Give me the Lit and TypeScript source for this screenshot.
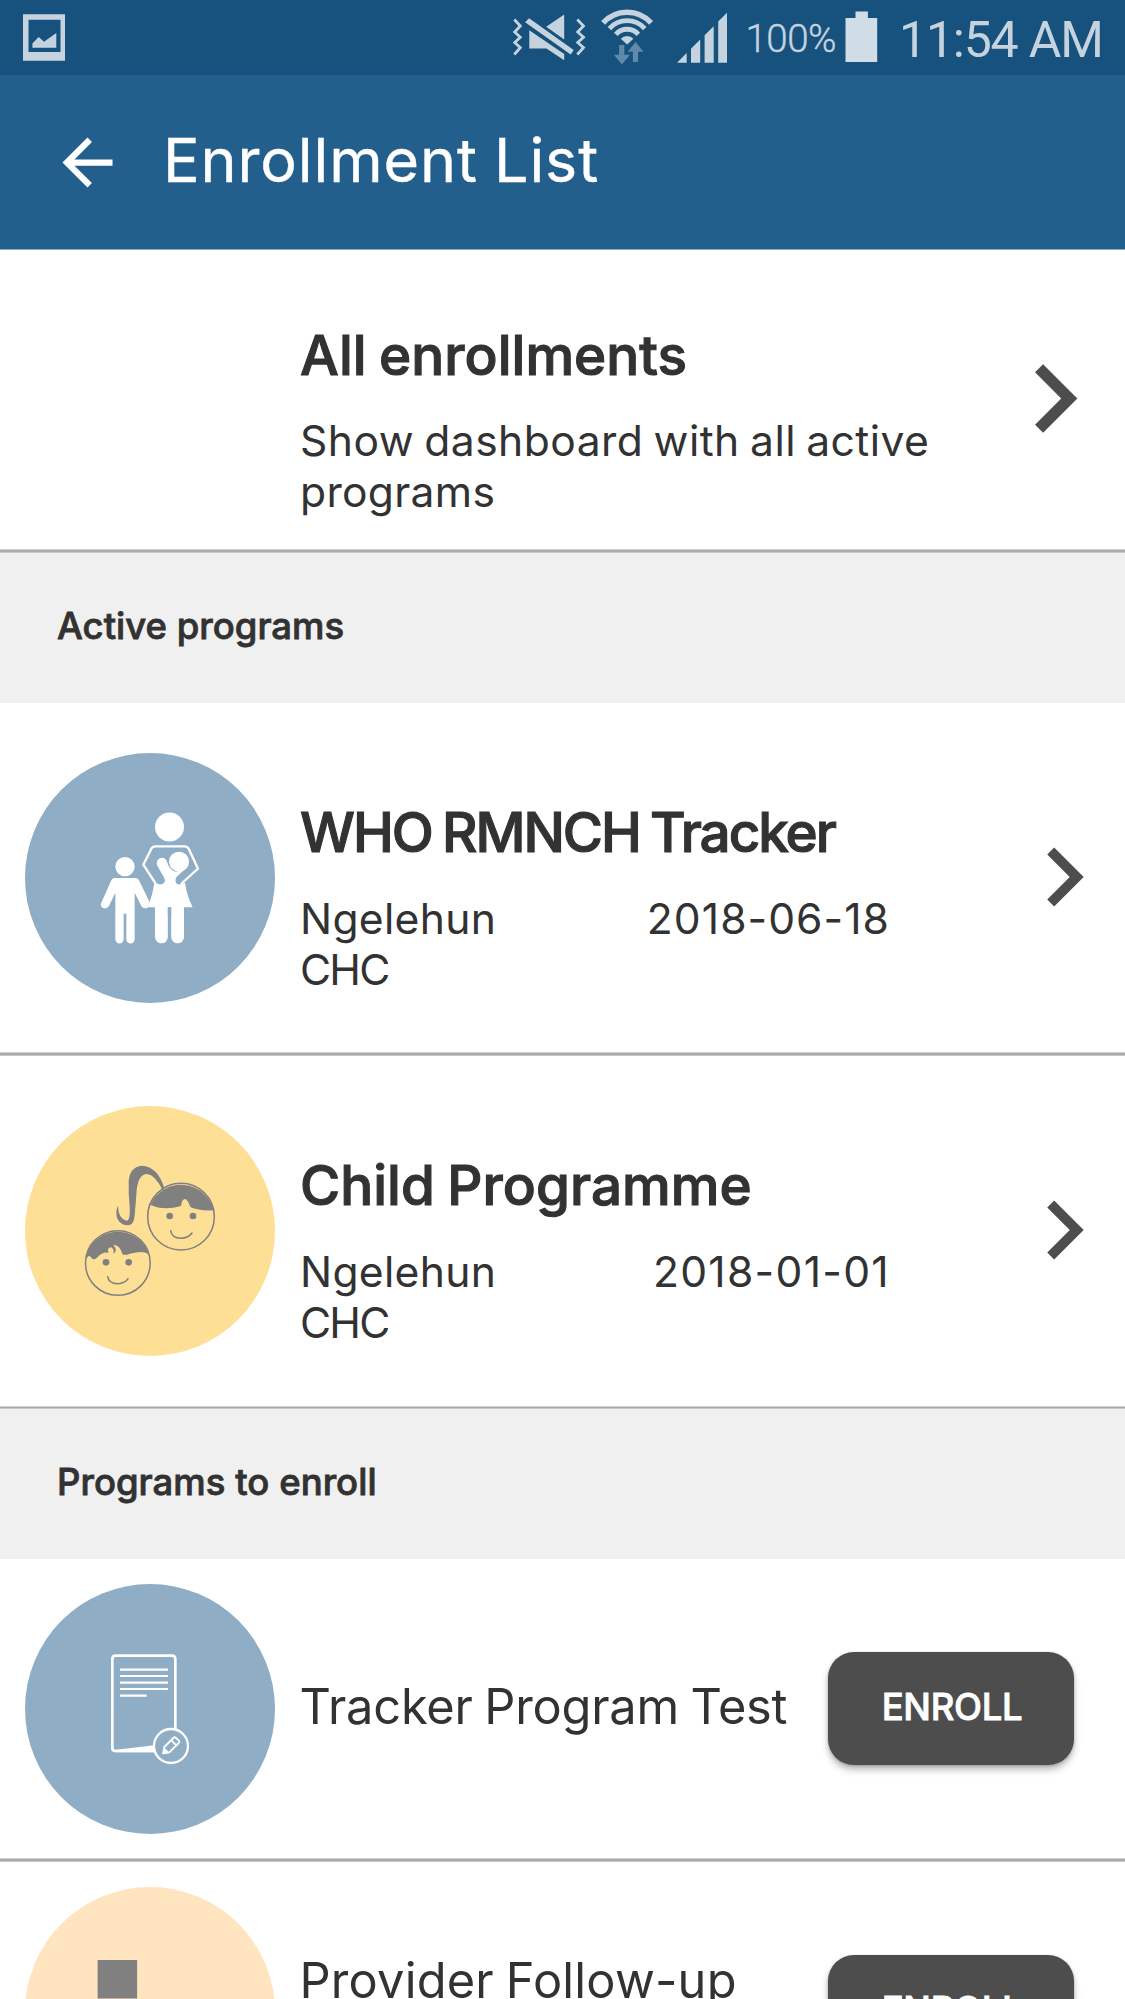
import { LitElement, html, css, svg, nothing } from "lit";
import { customElement, property } from "lit/decorators.js";
import { classMap } from "lit/directives/class-map.js";

type Art = "family" | "children" | "form" | "block";

interface Label {
  text: string;
  tracking: number;
}

interface ActiveProgram {
  name: Label;
  unit: Label[];
  date: Label;
  art: Art;
}

interface OpenProgram {
  name: Label;
  art: Art;
  tall?: boolean;
}

const label = (l: Label) => html`<span style="letter-spacing:${l.tracking}px">${l.text}</span>`;

const activePrograms: ActiveProgram[] = [
  {
    name: { text: "WHO RMNCH Tracker", tracking: -2.05 },
    unit: [{ text: "Ngelehun", tracking: 0.3 }, { text: "CHC", tracking: -1.8 }],
    date: { text: "2018-06-18", tracking: 1.05 },
    art: "family",
  },
  {
    name: { text: "Child Programme", tracking: 0.05 },
    unit: [{ text: "Ngelehun", tracking: 0.3 }, { text: "CHC", tracking: -1.8 }],
    date: { text: "2018-01-01", tracking: 1.3 },
    art: "children",
  },
];

const openPrograms: OpenProgram[] = [
  { name: { text: "Tracker Program Test", tracking: -0.22 }, art: "form" },
  { name: { text: "Provider Follow-up", tracking: 0.2 }, art: "block", tall: true },
];

@customElement("status-bar")
class StatusBar extends LitElement {
  static styles = css`
    :host {
      display: flex;
      height: 75px;
      background: #17517d;
      color: #c5d3df;
      font-family: Roboto, sans-serif;
    }
    svg { display: block; flex: none; fill: currentColor; }
    .spacer { flex: 1; }
    .level { width: 96px; font-size: 38.5px; line-height: 75px; padding-top: 1px; box-sizing: border-box; font-weight: 300; height: 75px; -webkit-text-stroke: 0.4px currentColor; }
    .level span { letter-spacing: -0.5px; margin-left: -0.5px; }
    .battery { color: #d0dde7; }
    .time { width: 226px; font-size: 50px; line-height: 80px; font-weight: 400; letter-spacing: -1.2px; box-sizing: border-box; white-space: nowrap; }
  `;
  render() {
    return html`
      <svg width="90" height="75" viewBox="0 0 90 75">
        <path fill-rule="evenodd" d="M23 14.3H65V60.7H23zM28.5 19.7V52H60.5V19.7z" />
        <path d="M32.4 43.5L38.7 37 44 41.7 56.3 33V47.8H32.4z" />
      </svg>
      <div class="spacer"></div>
      <svg width="240" height="75" viewBox="506.300 0 240 75">
        <g fill="none" stroke="currentColor" stroke-width="2.8">
          <path d="M514.6 19.5L520.6 26 515 32 520.6 37.3 515 42.5 520.6 47.7 514.6 54.5" />
          <path d="M577.6 19.5L583.8 26 578 32 583.8 37.3 578 42.5 583.8 47.7 577.6 54.5" />
        </g>
        <path d="M525.4 22.2L529.4 18.2 574 50 571 54.5zM546.5 26.7L564.5 14.5V39.5zM529.6 30.3L564.5 54V60.3L546.7 48.4H529.6z" />
        <g fill="none" stroke="currentColor">
          <path stroke-width="5.4" d="M603.4 22.9A32.3 32.3 0 0 1 651.4 22.9" />
          <path stroke-width="4.8" d="M609.7 28.6A23.8 23.8 0 0 1 645.1 28.6" />
          <path stroke-width="4.8" d="M616.1 34.3A15.2 15.2 0 0 1 638.7 34.3" />
        </g>
        <path d="M627.4 44.5L621.1 38.8A8.5 8.5 0 0 1 633.7 38.8z" />
        <path fill="#6189a9" d="M619.4 45H624.6V54.7H630.2L622.2 64.5 614.2 54.7H619.4zM635.9 42L643.9 51.7H638.4V62H633.2V51.7H628z" />
        <path d="M677.3 62.7L687 53V62.7zM691.3 62.7V48.7L700.5 39.6V62.7zM704.9 62.7V35.2L714 26.2V62.7zM718.5 62.7V21.6L727.3 12.7V62.7z" />
      </svg>
      <div class="level"><span>100%</span></div>
      <svg class="battery" width="57" height="75" viewBox="842.300 0 57 75">
        <path d="M855.8 11.5H868.2V18H877.5V62H845.8V18H855.8z" />
      </svg>
      <div class="time">11:54 AM</div>
    `;
  }
}

@customElement("program-badge")
class ProgramBadge extends LitElement {
  @property() art: Art = "family";
  static styles = css`
    :host { display: block; flex: none; width: 250px; height: 250px; }
    .disc { width: 250px; height: 250px; border-radius: 50%; overflow: hidden; }
    .family, .form { background: #90adc6; }
    .children { background: #fddf96; }
    .block { background: #ffe4c0; }
    svg { display: block; }
  `;
  private drawing() {
    switch (this.art) {
      case "family":
        return svg`<svg width="250" height="250" viewBox="75 38 750 750" fill="#fff">
          <circle cx="508.5" cy="260" r="43.5" />
          <path d="M467 430L430 373 454 325Q458 318 466 318H555Q562 318 566 325L594 385 543 431" fill="none" stroke="#fff" stroke-width="7" stroke-linejoin="round" />
          <path d="M463 426Q474 433 484 432 499 428 493 413L472 376A15.5 15.5 0 0 1 500 361Q507 388 530 394L562 381 530 409Q523 420 530 430 540 436 555 427 560 465 578 501H443Q458 465 463 426z" />
          <circle cx="537" cy="364" r="30" />
          <path d="M505 366Q508 388 527 393" fill="none" stroke="#90adc6" stroke-width="3" />
          <rect x="465" y="470" width="38.500" height="139" rx="19" />
          <rect x="513.500" y="470" width="38.500" height="139" rx="19" />
          <rect x="503.500" y="501" width="10" height="30" fill="#90adc6" />
          <circle cx="375" cy="379" r="29" />
          <path d="M343 413H408Q414 414 417 420L449 486 443 502Q430 507 424 497L404 457V597a12.500 12.500 0 0 1-25 0V520H371V597a12.500 12.500 0 0 1-25 0V457L327 497Q320 507 309 503 299 497 304 487L334 420Q337 414 343 413z" />
        </svg>`;
      case "children":
        return svg`<svg width="250" height="250" viewBox="75 47 750 750" fill="#808080">
          <g fill="none" stroke="#808080" stroke-width="4.500" stroke-linecap="round">
            <circle cx="543" cy="379" r="100" />
            <circle cx="353.500" cy="518" r="97" />
            <path d="M512 421Q516 444 543 444 565 443 576 428M323 559Q326 580 353 580 376 579 384 565" />
          </g>
          <path d="M451 343Q490 362 543 347 546 326 555 326 562 326 571 350 595 362 641 360A101 101 0 0 0 451 343z" />
          <circle cx="509" cy="377" r="10" /><circle cx="579" cy="377" r="10" />
          <path d="M494 297Q475 228 425 226 388 230 386 275 385 310 389 350 391 391 380 391 355 386 354 346 345 365 352 385 362 404 385 405 402 404 404 375 408 330 410 300 415 252 440 251 464 252 488 299z" />
          <path d="M256 512Q265 490 272 500 281 514 293 500 308 483 326 487 319 473 334 471 345 480 339 490 356 483 340 463 360 465 367 490 372 497 390 490 430 480 443 490L448 496A98 98 0 0 0 256 512z" />
          <circle cx="318" cy="516" r="10" /><circle cx="386" cy="516" r="10" />
        </svg>`;
      case "form":
        return svg`<svg width="250" height="250" viewBox="75 40 750 750" fill="none" stroke="#fff">
          <path stroke-width="8" d="M526 475V265Q526 255 516 255H347Q337 255 337 265V532Q337 541 347 541H462" />
          <path fill="#fff" stroke="none" d="M343 538L462 524V545H345z" />
          <circle cx="513" cy="526" r="51" stroke-width="7" />
          <path stroke-width="6.500" d="M360 297H504M360 316H504M360 336H504M360 355H504M360 375H440" />
          <path stroke-width="5.500" stroke-linejoin="round" d="M490 548L493 529 520 502Q524 498 528 502L536 509Q540 513 536 517L508 545zM513 508L529 524" />
          <path fill="#fff" stroke="none" d="M487 551L491 529 509 546z" />
        </svg>`;
      default:
        return svg`<svg width="250" height="250" viewBox="0 0 250 250"><rect x="72.600" y="73" width="39.500" height="38.500" fill="#808080" /></svg>`;
    }
  }
  render() {
    return html`<div class=${classMap({ disc: true, [this.art]: true })}>${this.drawing()}</div>`;
  }
}

@customElement("app-root")
class AppRoot extends LitElement {
  static styles = css`
    :host {
      display: block;
      width: 1125px;
      height: 1999px;
      overflow: hidden;
      background: #fff;
      color: #323232;
      font-family: Inter, Roboto, sans-serif;
    }
    .header {
      display: flex;
      align-items: center;
      gap: 38px;
      box-sizing: border-box;
      height: 175px;
      padding-left: 50px;
      background: #225f8d;
      border-bottom: 1px solid #8aabc4;
      color: #fff;
    }
    .header h1 { margin: 0; padding-bottom: 4px; font-size: 61px; font-weight: 400; line-height: 74px; word-spacing: -0.03em; -webkit-text-stroke: 0.4px currentColor; }
    svg { display: block; flex: none; }
    .row { display: flex; align-items: center; box-sizing: border-box; height: 299px; padding-left: 25px; }
    .row.active { height: 349px; }
    .row.active.last { height: 350px; }
    .row.all { padding-left: 300px; }
    .rule { height: 2px; background: #ababab; border-top: 1px solid #cfcfcf; border-bottom: 1px solid #c6c6c6; }
    .rule.thin { height: 1px; }
    .section { display: flex; align-items: center; box-sizing: border-box; height: 150px; padding: 0 0 5px 57px; background: #f0f0f0; font-size: 36.5px; font-weight: 500; -webkit-text-stroke: 0.8px currentColor; }
    .info { align-self: flex-start; flex: 1; padding-top: 96px; margin-left: 25px; }
    .all .info { padding-top: 72px; margin-left: 0; }
    .title { font-size: 54.8px; line-height: 66px; font-weight: 500; word-spacing: -0.04em; -webkit-text-stroke: 1.1px currentColor; white-space: nowrap; }
    .detail { display: flex; justify-content: space-between; margin-top: 28px; padding-right: 117px; font-size: 42.6px; line-height: 51.4px; word-spacing: -0.05em; white-space: nowrap; }
    .all .detail { margin-top: 27px; padding-right: 0; }
    .chevron { fill: #4d4d4d; margin: 0 2px 2px -2px; }
    .name { flex: 1; margin-left: 24.5px; padding-bottom: 3.5px; font-size: 48.75px; line-height: 58px; word-spacing: -0.04em; white-space: nowrap; }
    .name.tall { height: 116px; }
    .enroll {
      flex: none;
      width: 246px;
      height: 112.5px;
      margin-right: 51px;
      padding: 0 0 4px 2px;
      border: 0;
      border-radius: 26px;
      background: #4d4d4d;
      color: #fff;
      font: 500 36.5px Inter, Roboto, sans-serif;
      -webkit-text-stroke: 0.8px currentColor;
      box-shadow: 0 5px 7px rgba(0, 0, 0, 0.26), 0 1px 3px rgba(0, 0, 0, 0.2);
    }
  `;

  private chevron(size: number) {
    return html`<svg class="chevron" width=${size} height=${size} viewBox="0 0 24 24">
      <path d="M10 6L8.590 7.410 13.170 12l-4.580 4.590L10 18l6-6z" />
    </svg>`;
  }

  private section(l: Label) {
    return html`<div class="section">${label(l)}</div>`;
  }

  render() {
    return html`
      <status-bar></status-bar>
      <div class="header">
        <svg width="75" height="75" viewBox="0 0 24 24" fill="#fff">
          <path d="M20 11H7.830l5.590-5.590L12 4l-8 8 8 8 1.410-1.410L7.830 13H20v-2z" />
        </svg>
        <h1>${label({ text: "Enrollment List", tracking: 0.9 })}</h1>
      </div>
      <div class="row all">
        <div class="info">
          <div class="title">${label({ text: "All enrollments", tracking: 0.05 })}</div>
          <div class="detail">
            <div>
              ${label({ text: "Show dashboard with all active", tracking: 0.45 })}<br />
              ${label({ text: "programs", tracking: 0.3 })}
            </div>
          </div>
        </div>
        ${this.chevron(137)}
      </div>
      <div class="rule"></div>
      ${this.section({ text: "Active programs", tracking: 0 })}
      ${activePrograms.map((p, i) => {
        const last = i === activePrograms.length - 1;
        return html`
          <div class=${classMap({ row: true, active: true, last })}>
            <program-badge .art=${p.art}></program-badge>
            <div class="info">
              <div class="title">${label(p.name)}</div>
              <div class="detail">
                <div>${p.unit.map((u, n) => html`${n ? html`<br />` : nothing}${label(u)}`)}</div>
                <div>${label(p.date)}</div>
              </div>
            </div>
            ${this.chevron(118)}
          </div>
          <div class=${classMap({ rule: true, thin: last })}></div>
        `;
      })}
      ${this.section({ text: "Programs to enroll", tracking: 0.03 })}
      ${openPrograms.map(
        (p, i) => html`
          ${i ? html`<div class="rule"></div>` : nothing}
          <div class="row">
            <program-badge .art=${p.art}></program-badge>
            <div class=${classMap({ name: true, tall: !!p.tall })}>${label(p.name)}</div>
            <button class="enroll">${label({ text: "ENROLL", tracking: -0.3 })}</button>
          </div>
        `
      )}
    `;
  }
}
